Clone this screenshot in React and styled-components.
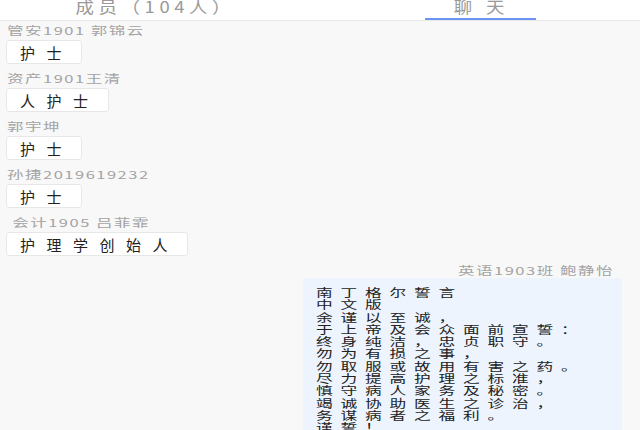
import React from 'react';
import styled, { createGlobalStyle } from 'styled-components';

const GlobalStyle = createGlobalStyle`
  html, body {
    margin: 0;
    padding: 0;
    background: #f8f8f8;
  }
  body {
    font-family: "Noto Sans CJK SC", "Noto Sans", sans-serif;
    overflow: hidden;
  }
`;

const Page = styled.div`
  width: 640px;
  height: 430px;
  overflow: hidden;
  background: #f8f8f8;
`;

const TabBar = styled.div`
  display: flex;
  height: 20px;
  background: #fff;
  border-bottom: 1px solid #e8e8e8;
`;

const Tab = styled.div`
  box-sizing: border-box;
  flex: 0 0 50%;
  display: flex;
  flex-direction: column;
  align-items: center;
  justify-content: space-between;
  padding-right: ${(p) => p.$shift || 0}px;
`;

const TabLabel = styled.span`
  font-size: 16px;
  line-height: 12px;
  color: #9a9a9a;
  letter-spacing: ${(p) => p.$ls}px;
  margin-right: -${(p) => p.$ls}px;
  transform: scaleX(1.15);
`;

const Underline = styled.div`
  width: 111px;
  height: 2px;
  background: ${(p) => (p.$active ? '#6c93f1' : 'transparent')};
`;

const Feed = styled.div`
  display: flex;
  flex-direction: column;
  gap: 8px;
  padding-top: 3px;
`;

const Message = styled.div`
  display: flex;
  flex-direction: column;
  align-items: ${(p) => (p.$mine ? 'flex-end' : 'flex-start')};
  padding: 0 ${(p) => (p.$mine ? 18 : 6)}px 0 6px;
`;

/* source screenshot is stretched sideways; names are widened to match */
const Sender = styled.div`
  font-size: 11px;
  line-height: 13px;
  height: 13px;
  color: #a3a3a3;
  letter-spacing: 1px;
  white-space: pre;
  transform: scaleX(1.5);
  transform-origin: ${(p) => (p.$mine ? 'right' : 'left')} top;
  margin-bottom: ${(p) => (p.$mine ? 1 : 3)}px;
  margin-right: ${(p) => (p.$mine ? 8 : 0)}px;
  margin-left: 1px;
`;

const Bubble = styled.div`
  box-sizing: border-box;
  height: 24px;
  display: flex;
  align-items: center;
  background: #fff;
  border: 1px solid #e7e7e7;
  border-radius: 3px;
  padding: 0 8px 0 13px;
  font-size: 15px;
  letter-spacing: 11.5px;
  color: #222;
  white-space: nowrap;
`;

const LongBubble = styled.div`
  box-sizing: border-box;
  width: 319px;
  background: #edf4fd;
  border-radius: 2px;
  padding: 8px 10px 20px 13px;
`;

const OathText = styled.div`
  font-size: 11.5px;
  line-height: 12.3px;
  letter-spacing: 5.4px;
  color: #222;
  white-space: pre;
  transform: scaleX(1.45);
  transform-origin: left top;
`;

const messages = [
  { sender: '管安1901 郭锦云', text: '护士' },
  { sender: '资产1901王清', text: '人护士' },
  { sender: '郭宇坤', text: '护士' },
  { sender: '孙捷2019619232', text: '护士' },
  { sender: ' 会计1905 吕菲霏', text: '护理学创始人' },
];

const oath = `南丁格尔誓言
中文版
余谨以至诚，
于上帝及会众面前宣誓：
终身纯洁，忠贞职守。
勿为有损之事，
勿取服或故用有害之药。
尽力提高护理之标准，
慎守病人家务及秘密。
竭诚协助医生之诊治，
务谋病者之福利。
谨誓！`;

export default function App() {
  return (
    <Page>
      <GlobalStyle />
      <TabBar>
        <Tab $shift={14}>
          <TabLabel $ls={4}>成员（104人）</TabLabel>
          <Underline />
        </Tab>
        <Tab>
          <TabLabel $ls={12}>聊天</TabLabel>
          <Underline $active />
        </Tab>
      </TabBar>
      <Feed>
        {messages.map((m, i) => (
          <Message key={i}>
            <Sender>{m.sender}</Sender>
            <Bubble>{m.text}</Bubble>
          </Message>
        ))}
        <Message $mine>
          <Sender $mine>英语1903班 鲍静怡</Sender>
          <LongBubble>
            <OathText>{oath}</OathText>
          </LongBubble>
        </Message>
      </Feed>
    </Page>
  );
}
